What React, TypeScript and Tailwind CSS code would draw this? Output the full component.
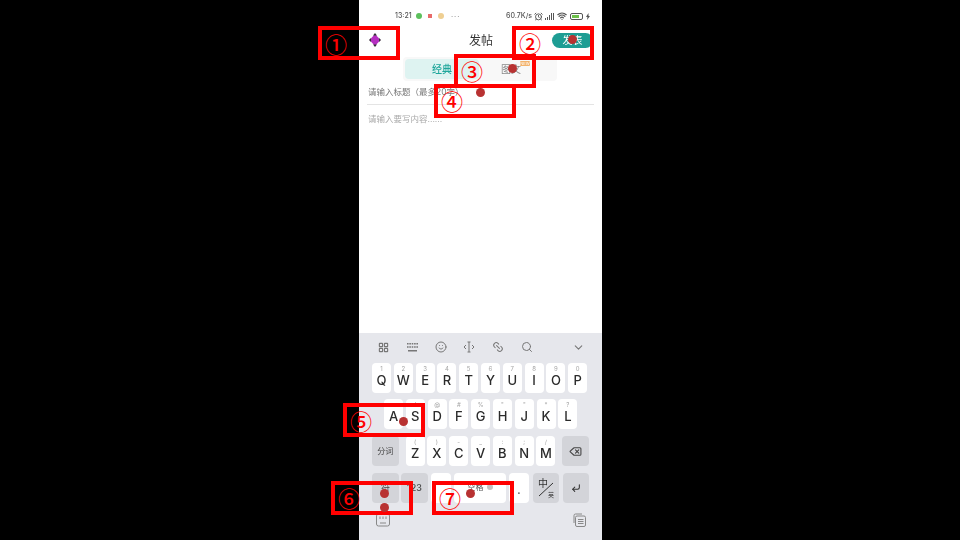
import React from 'react'
import { AlarmClock, ChevronDown, CornerDownLeft, Delete, LayoutGrid, Link2, Search, Smile, Wifi } from 'lucide-react'

const row1 = [['Q', '1'], ['W', '2'], ['E', '3'], ['R', '4'], ['T', '5'], ['Y', '6'], ['U', '7'], ['I', '8'], ['O', '9'], ['P', '0']]
const row2 = [['A', '~'], ['S', '!'], ['D', '@'], ['F', '#'], ['G', '%'], ['H', '"'], ['J', '"'], ['K', '*'], ['L', '?']]
const row3 = [['Z', '('], ['X', ')'], ['C', '-'], ['V', '_'], ['B', ':'], ['N', ';'], ['M', '/']]

const boxes = [
  { n: '①', box: 'left-[318px] top-[26px]', num: 'left-[325px] top-[30px]' },
  { n: '②', box: 'left-[512px] top-[26px]', num: 'left-[519px] top-[29px]' },
  { n: '③', box: 'left-[454px] top-[54px]', num: 'left-[461px] top-[57px]' },
  { n: '④', box: 'left-[434px] top-[84px]', num: 'left-[441px] top-[87px]' },
  { n: '⑤', box: 'left-[343px] top-[403px]', num: 'left-[350px] top-[407px]' },
  { n: '⑥', box: 'left-[331px] top-[481px]', num: 'left-[338px] top-[484px]' },
  { n: '⑦', box: 'left-[432px] top-[481px]', num: 'left-[439px] top-[484px]' },
]

const dots = [
  'left-[568px] top-[35px]',
  'left-[508px] top-[64px]',
  'left-[476px] top-[88px]',
  'left-[399px] top-[417px]',
  'left-[380px] top-[489px]',
  'left-[380px] top-[503px]',
  'left-[466px] top-[489px]',
]

function LetterKey({ label, sub }: { label: string; sub: string }) {
  return (
    <div className="w-[19px] h-[30px] bg-white rounded-[4px] flex flex-col items-center text-[#2b2b2b]">
      <span className="text-[6px] leading-[8px] mt-[2px] text-[#a5a5a5]">{sub}</span>
      <span className="text-[13px] leading-[15px] font-medium">{label}</span>
    </div>
  )
}

function StatusBar() {
  return (
    <div className="h-[26px] pt-[6px] pl-[36px] pr-[12px] flex items-center text-[7px] font-medium text-[#555]">
      <span className="w-[18px]">13:21</span>
      <span className="ml-[3px] w-[6px] h-[6px] rounded-full bg-[#5cc05c]" />
      <span className="ml-[6px] w-[4px] h-[4px] bg-[#e86a6a]" />
      <span className="ml-[6px] w-[6px] h-[6px] rounded-full bg-[#efcf92]" />
      <span className="ml-[7px] text-[#777] tracking-[1px] leading-none">···</span>
      <span className="ml-auto">60.7K/s</span>
      <AlarmClock className="ml-[2px] w-[9px] h-[9px]" strokeWidth={2.5} />
      <span className="ml-[2px] flex items-end gap-[1px] h-[7px]">
        <i className="w-[1px] h-[2px] bg-[#555]" />
        <i className="w-[1px] h-[3px] bg-[#555]" />
        <i className="w-[1px] h-[5px] bg-[#555]" />
        <i className="w-[1px] h-[7px] bg-[#555]" />
        <i className="w-[1px] h-[7px] bg-[#555]" />
      </span>
      <Wifi className="ml-[3px] w-[10px] h-[10px]" strokeWidth={3} />
      <span className="ml-[3px] w-[13px] h-[7px] rounded-[2px] border border-[#555] p-[1px]">
        <span className="block w-[7px] h-full bg-[#6cc04a]" />
      </span>
      <svg width="4" height="7" viewBox="0 0 4 7" className="ml-[3px]" fill="#555">
        <path d="M2.5 0L0 4h1.5L1 7l3-4H2.5z" />
      </svg>
    </div>
  )
}

function Header() {
  return (
    <div className="h-[28px] flex items-center pl-[10px] pr-[9px]">
      <svg width="14" height="14" viewBox="0 0 14 14" className="ml-[-1px]">
        <path d="M7 1 L12.5 7 L7 13 L1.5 7 Z" fill="#b52fc0" />
        <path d="M7 0 L9 2.5 H5 Z M1 7 L3 5 V9 Z M13 7 L11 5 V9 Z M7 14 L5 11.5 H9 Z" fill="#333" />
      </svg>
      <span className="ml-[87px] mt-[1px] text-[12px] text-[#333]">发帖</span>
      <button className="ml-auto w-[41px] h-[15px] rounded-full bg-[#1e9d94] text-white text-[10px] leading-none">
        发表
      </button>
    </div>
  )
}

function Tabs() {
  return (
    <div className="mt-[3px] mx-[44px] h-[24px] w-[154px] rounded-[4px] bg-[#f8f8f8] p-[2px] flex">
      <div className="w-[74px] rounded-[4px] bg-[#def3f1] text-[#1fa69b] text-[10px] font-medium flex items-center justify-center">
        经典
      </div>
      <div className="relative flex-1 pr-[12px] text-[#8a8a8a] text-[10px] flex items-center justify-center">
        图文
        <span className="absolute left-[41px] top-[2px] w-[10px] h-[5px] rounded-[1px] bg-[#f3b36c] text-white text-[4px] leading-[5px] text-center">
          NEW
        </span>
      </div>
    </div>
  )
}

function KeyboardPanel() {
  return (
    <div className="h-[207px] bg-[#e6e7ec] flex flex-col px-[13px]">
      <div className="h-[30px] pb-[2px] flex items-center text-[#777]">
        <LayoutGrid className="ml-[6px] w-[11px] h-[11px]" strokeWidth={2.5} />
        <svg width="11" height="9" viewBox="0 0 11 9" className="ml-[18px]" fill="#777">
          <path d="M0 0h1.6v1.6H0zM2.3 0h1.6v1.6H2.3zM4.7 0h1.6v1.6H4.7zM7.1 0h1.6v1.6H7.1zM9.4 0H11v1.6H9.4zM0 3.2h1.6v1.6H0zM2.3 3.2h1.6v1.6H2.3zM4.7 3.2h1.6v1.6H4.7zM7.1 3.2h1.6v1.6H7.1zM9.4 3.2H11v1.6H9.4zM1 7h9v1.4H1z" />
        </svg>
        <Smile className="ml-[17px] w-[12px] h-[12px]" />
        <svg width="12" height="12" viewBox="0 0 12 12" className="ml-[16px]" fill="none" stroke="#777" strokeWidth="1">
          <path d="M6 1v10M4.5 1h3M4.5 11h3M3 4L1 6l2 2M9 4l2 2-2 2" />
        </svg>
        <Link2 className="ml-[17px] w-[12px] h-[12px] rotate-45" />
        <Search className="ml-[17px] w-[12px] h-[12px]" />
        <ChevronDown className="ml-[39px] w-[13px] h-[13px]" />
      </div>
      <div className="flex gap-[2.8px]">
        {row1.map(([l, s]) => <LetterKey key={l} label={l} sub={s} />)}
      </div>
      <div className="mt-[6px] ml-[12px] flex gap-[2.8px]">
        {row2.map(([l, s]) => <LetterKey key={l} label={l} sub={s} />)}
      </div>
      <div className="mt-[7px] flex">
        <div className="w-[27px] h-[30px] rounded-[4px] bg-[#d3d4d9] text-[8px] text-[#444] flex items-center justify-center">分词</div>
        <div className="ml-[7px] flex gap-[2.8px]">
          {row3.map(([l, s]) => <LetterKey key={l} label={l} sub={s} />)}
        </div>
        <div className="ml-[7px] w-[27px] h-[30px] rounded-[4px] bg-[#d3d4d9] flex items-center justify-center text-[#444]">
          <Delete className="w-[13px] h-[13px]" />
        </div>
      </div>
      <div className="mt-[7px] flex">
        <div className="w-[27px] h-[30px] rounded-[4px] bg-[#d3d4d9] text-[9px] text-[#444] flex items-center justify-center">符</div>
        <div className="ml-[2px] w-[27px] h-[30px] rounded-[4px] bg-[#d3d4d9] text-[9px] font-medium text-[#444] flex items-center justify-center">123</div>
        <div className="ml-[3px] w-[20px] h-[30px] rounded-[4px] bg-white" />
        <div className="ml-[3px] w-[52px] h-[30px] rounded-[4px] bg-white text-[8px] text-[#555] flex items-center justify-center gap-[3px] pb-[2px]">
          空格
          <span className="w-[6px] h-[6px] rounded-full bg-[#c4c4c4]" />
        </div>
        <div className="ml-[3px] w-[20px] h-[30px] rounded-[4px] bg-white text-[10px] font-bold text-[#555] flex items-end justify-center pb-[5px]">.</div>
        <div className="relative ml-[4px] w-[26px] h-[30px] rounded-[4px] bg-[#d3d4d9] text-[#333]">
          <span className="absolute left-[5px] top-[5px] text-[10px] leading-none">中</span>
          <span className="absolute left-[15px] top-[19px] text-[6px] leading-none">英</span>
          <svg width="26" height="30" viewBox="0 0 26 30" className="absolute inset-0">
            <path d="M6 23 L20 10" stroke="#333" strokeWidth="1" />
          </svg>
        </div>
        <div className="ml-[4px] w-[26px] h-[30px] rounded-[4px] bg-[#d3d4d9] text-[#333] flex items-center justify-center">
          <CornerDownLeft className="w-[10px] h-[10px]" strokeWidth={2.5} />
        </div>
      </div>
      <div className="mt-[10px] flex items-center justify-between pl-[4px] pr-[3px]">
        <svg width="14" height="14" viewBox="0 0 14 14" fill="none" stroke="#888" strokeWidth="1">
          <rect x="0.5" y="1" width="13" height="12" rx="2" />
          <path d="M4 3.5v2.5M7 3.5v2.5M10 3.5v2.5M4 10h6" />
        </svg>
        <svg width="14" height="14" viewBox="0 0 14 14" fill="none" stroke="#888" strokeWidth="1">
          <path d="M2 10V2.5A1.5 1.5 0 0 1 3.5 1H10" />
          <rect x="3.5" y="3" width="10" height="10.5" rx="1.5" />
          <path d="M6 6.5h5.5M6 8.5h5.5M6 10.5h5.5" />
        </svg>
      </div>
    </div>
  )
}

export default function App() {
  return (
    <div className="relative w-[960px] h-[540px] bg-black flex justify-center overflow-hidden font-['Inter','Noto_Sans_CJK_SC',sans-serif]">
      <div className="ml-[1px] w-[243px] h-full bg-white flex flex-col blur-[0.35px]">
        <StatusBar />
        <Header />
        <Tabs />
        <div className="mt-[5px] ml-[9px] text-[8.5px] leading-[12px] text-[#777]">请输入标题（最多20字）</div>
        <div className="mt-[6px] mx-[8px] h-px bg-[#e4e4e4]" />
        <div className="mt-[8px] ml-[9px] text-[8.5px] leading-[12px] text-[#aaa]">请输入要写内容......</div>
        <div className="flex-1" />
        <KeyboardPanel />
      </div>
      {boxes.map((b) => (
        <React.Fragment key={b.n}>
          <div className={`absolute ${b.box} w-[82px] h-[34px] border-4 border-[#ff0000]`} />
          <span className={`absolute ${b.num} text-[22px] leading-[26px] font-medium text-[#ff0000] font-['Noto_Sans_CJK_SC',sans-serif]`}>{b.n}</span>
        </React.Fragment>
      ))}
      {dots.map((d) => (
        <span key={d} className={`absolute ${d} w-[9px] h-[9px] rounded-full bg-[#b83232]`} />
      ))}
    </div>
  )
}
